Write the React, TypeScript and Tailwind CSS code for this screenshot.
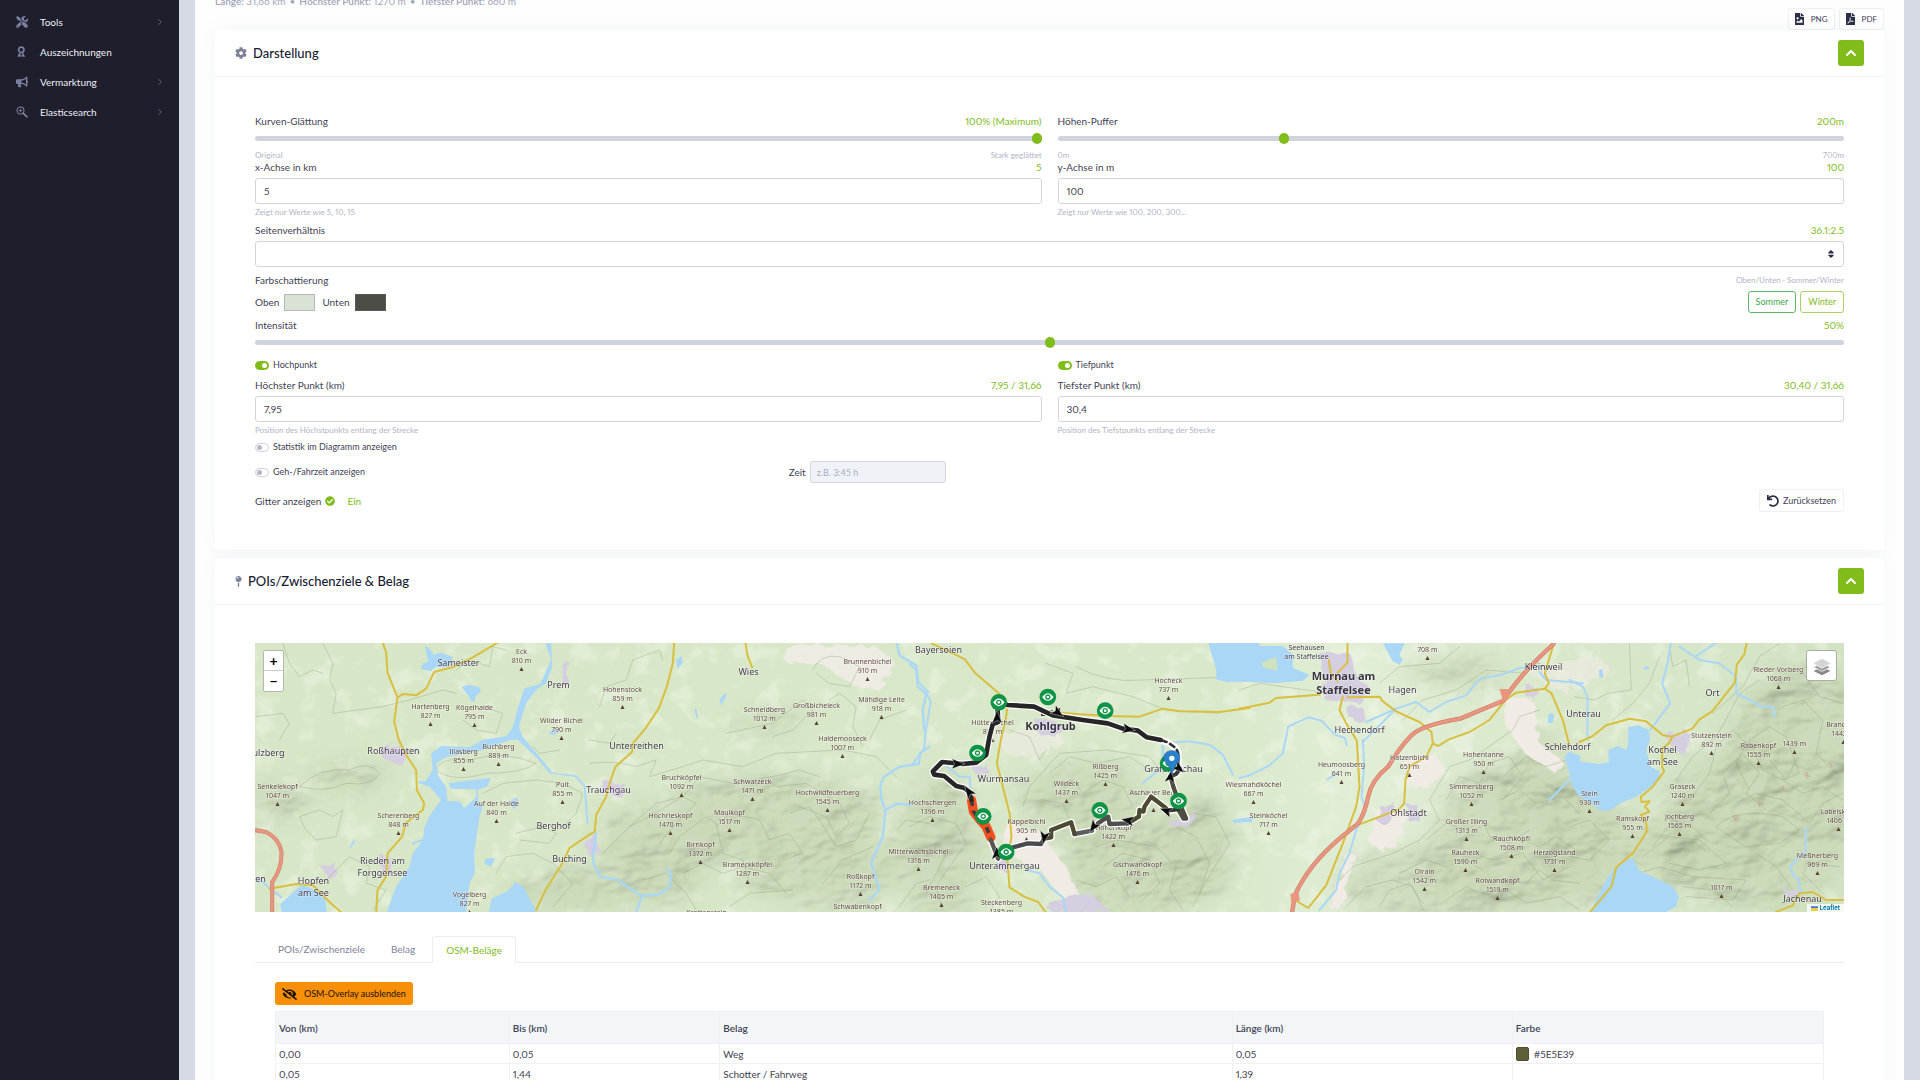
import React, { useState } from "react";
import {
  FaTools,
  FaBullhorn,
  FaCog,
  FaMapPin,
  FaFileImage,
  FaFilePdf,
  FaUndo,
  FaEyeSlash,
  FaSort,
  FaCheckCircle,
} from "react-icons/fa";
import { LuChevronRight, LuChevronUp } from "react-icons/lu";

const MedalIcon = () => (
  <svg viewBox="0 0 16 16" className="h-3 w-3" fill="none" stroke="currentColor" aria-hidden="true">
    <circle cx="7" cy="5" r="3.600" strokeWidth="2.200" />
    <path d="M5.500 9.500 3.500 12M8.500 9.500l2 2.500" strokeWidth="1.600" />
    <path d="m3.500 10.500-1.500 4 2.500-.4 1.500 1 .8-3.600zM10.500 10.500l1.500 4-2.500-.4-1.500 1-.8-3.600z" fill="currentColor" stroke="none" />
  </svg>
);

const SearchIcon = () => (
  <svg viewBox="0 0 16 16" className="h-3 w-3" fill="none" stroke="currentColor" aria-hidden="true">
    <circle cx="6" cy="6" r="4.600" strokeWidth="1.500" />
    <path d="M6 3.800v4.400M3.800 6h4.400" strokeWidth="1.200" />
    <path d="m9.800 9.800 4.700 4.700" strokeWidth="2.200" strokeLinecap="round" />
  </svg>
);

const NAV = [
  { label: "Tools", icon: <FaTools />, sub: true },
  { label: "Auszeichnungen", icon: <MedalIcon />, sub: false },
  { label: "Vermarktung", icon: <FaBullhorn />, sub: true },
  { label: "Elasticsearch", icon: <SearchIcon />, sub: true },
];

function Sidebar() {
  return (
    <nav className="flex w-[179px] shrink-0 flex-col bg-[#1e1e2d] pt-[7px]">
      {NAV.map((n) => (
        <a key={n.label} href="#" className="flex h-[30px] items-center pr-3.5 pl-4 text-[#f0f0f5]">
          <span className="flex w-6 text-xs text-[#7c7fa0]">{n.icon}</span>
          <span className="flex-1">{n.label}</span>
          {n.sub && <LuChevronRight className="h-2.5 w-2.5 text-[#6c6e91]" />}
        </a>
      ))}
    </nav>
  );
}

function LabelRow({ id, label, value }: { id?: string; label: string; value?: string }) {
  return (
    <div className="mb-1 flex items-center justify-between leading-[14px]">
      <label htmlFor={id}>{label}</label>
      <span className="text-[#80bc1a]">{value}</span>
    </div>
  );
}

function Hint({ left, right }: { left: string; right?: string }) {
  return (
    <div className="flex justify-between text-[8px] leading-3 text-[#b1b4c5]">
      <span>{left}</span>
      <span>{right}</span>
    </div>
  );
}

function Range({ id, max, value }: { id: string; max: number; value: number }) {
  const [v, setV] = useState(value);
  return (
    <input
      id={id}
      type="range"
      min={0}
      max={max}
      value={v}
      onChange={(e) => setV(Number(e.target.value))}
      className="block h-3 w-full appearance-none bg-transparent [&::-webkit-slider-runnable-track]:h-[5px] [&::-webkit-slider-runnable-track]:rounded-full [&::-webkit-slider-runnable-track]:bg-[#d1d4df] [&::-webkit-slider-thumb]:-mt-[3px] [&::-webkit-slider-thumb]:h-[11px] [&::-webkit-slider-thumb]:w-[10px] [&::-webkit-slider-thumb]:appearance-none [&::-webkit-slider-thumb]:rounded-full [&::-webkit-slider-thumb]:bg-[#80bc1a]"
    />
  );
}

function TextInput({ id, value }: { id: string; value: string }) {
  return (
    <input
      id={id}
      defaultValue={value}
      className="block h-[26px] w-full rounded-[3px] border border-[#d3d5da] bg-white px-2 outline-none"
    />
  );
}

function Switch({ id, label, on }: { id: string; label: string; on?: boolean }) {
  return (
    <label htmlFor={id} className="flex items-center gap-1 text-[9px] leading-[14px]">
      <input
        id={id}
        type="checkbox"
        role="switch"
        defaultChecked={on}
        className="flex h-[9px] w-[14px] appearance-none items-center rounded-full border border-[#cfd1da] bg-white p-px before:block before:h-[5px] before:w-[5px] before:rounded-full before:bg-[#b5b8c5] checked:border-[#80bc1a] checked:bg-[#80bc1a] checked:before:ml-[5px] checked:before:bg-white"
      />
      {label}
    </label>
  );
}

function Card({ icon, title, children }: { icon: React.ReactNode; title: string; children: React.ReactNode }) {
  return (
    <section className="rounded-sm bg-white shadow-[0_0_20px_rgba(76,87,125,0.06)]">
      <header className="flex h-[47px] items-center border-b border-[#f3f3f7] pr-5 pl-5">
        <span className="mr-1.5 text-[#7e8299]">{icon}</span>
        <h2 className="flex-1 text-[13px] font-medium text-[#181c32]">{title}</h2>
        <button
          type="button"
          aria-label="Einklappen"
          className="flex h-[26px] w-[26px] items-center justify-center rounded-[3px] bg-[#80bc1a] text-white"
        >
          <LuChevronUp className="h-4 w-4" strokeWidth={3} />
        </button>
      </header>
      {children}
    </section>
  );
}

function Darstellung() {
  return (
    <Card icon={<FaCog className="h-3 w-3" />} title="Darstellung">
      <div className="px-10 pt-[37px] pb-[38px]">
        <div className="grid grid-cols-2 gap-x-4">
          <div>
            <LabelRow id="smooth" label="Kurven-Glättung" value="100% (Maximum)" />
            <Range id="smooth" max={100} value={100} />
            <div className="mt-[5px] -mb-px">
              <Hint left="Original" right="Stark geglättet" />
            </div>
            <LabelRow id="xaxis" label="x-Achse in km" value="5" />
            <TextInput id="xaxis" value="5" />
            <div className="mt-0.5">
              <Hint left="Zeigt nur Werte wie 5, 10, 15" />
            </div>
          </div>
          <div>
            <LabelRow id="buffer" label="Höhen-Puffer" value="200m" />
            <Range id="buffer" max={700} value={200} />
            <div className="mt-[5px] -mb-px">
              <Hint left="0m" right="700m" />
            </div>
            <LabelRow id="yaxis" label="y-Achse in m" value="100" />
            <TextInput id="yaxis" value="100" />
            <div className="mt-0.5">
              <Hint left="Zeigt nur Werte wie 100, 200, 300..." />
            </div>
          </div>
        </div>

        <div className="mt-[5px]">
          <LabelRow id="ratio" label="Seitenverhältnis" value="36.1:2.5" />
          <div className="relative">
            <select
              id="ratio"
              className="block h-[26px] w-full appearance-none rounded-[3px] border border-[#d3d5da] bg-white px-2 outline-none"
            >
              <option></option>
            </select>
            <FaSort className="pointer-events-none absolute top-2 right-2 h-2.5 w-2.5 text-[#2b2f48]" />
          </div>
        </div>

        <div className="mt-1.5 mb-1 flex justify-between leading-[14px]">
          <span>Farbschattierung</span>
          <span className="text-[8px] text-[#b1b4c5]">Oben/Unten · Sommer/Winter</span>
        </div>
        <div className="flex h-[22px] items-center">
          <span className="mr-[5px]" id="lbl-top">Oben</span>
          <button type="button" aria-labelledby="lbl-top" className="mr-[7px] h-[17px] w-[31px] border border-[#b4bab0] bg-[#d9e2d4]" />
          <span className="mr-[5px]" id="lbl-bottom">Unten</span>
          <button type="button" aria-labelledby="lbl-bottom" className="h-[17px] w-[31px] border border-[#5a5b55] bg-[#4b4c46]" />
          <span className="flex-1" />
          <button type="button" className="mr-1 h-[22px] rounded-[3px] border border-[#5fb868] px-[7px] text-[9px] text-[#3fa64a]">
            Sommer
          </button>
          <button type="button" className="h-[22px] rounded-[3px] border border-[#a9d265] px-[7px] text-[9px] text-[#80bc1a]">
            Winter
          </button>
        </div>

        <div className="mt-[5px]">
          <LabelRow id="intensity" label="Intensität" value="50%" />
          <Range id="intensity" max={100} value={50} />
        </div>

        <div className="mt-2.5 grid grid-cols-2 gap-x-4">
          <div>
            <Switch id="sw-high" label="Hochpunkt" on />
            <div className="mt-1.5">
              <LabelRow id="high" label="Höchster Punkt (km)" value="7,95 / 31,66" />
              <TextInput id="high" value="7,95" />
            </div>
            <div className="mt-0.5">
              <Hint left="Position des Höchstpunkts entlang der Strecke" />
            </div>
          </div>
          <div>
            <Switch id="sw-low" label="Tiefpunkt" on />
            <div className="mt-1.5">
              <LabelRow id="low" label="Tiefster Punkt (km)" value="30,40 / 31,66" />
              <TextInput id="low" value="30,4" />
            </div>
            <div className="mt-0.5">
              <Hint left="Position des Tiefstpunkts entlang der Strecke" />
            </div>
          </div>
        </div>

        <div className="mt-1">
          <Switch id="sw-stat" label="Statistik im Diagramm anzeigen" />
        </div>
        <div className="mt-[7px] grid grid-cols-3 items-center">
          <Switch id="sw-time" label="Geh-/Fahrzeit anzeigen" />
          <div className="flex items-center gap-1 pl-1">
            <label htmlFor="time">Zeit</label>
            <input
              id="time"
              disabled
              placeholder="z.B. 3:45 h"
              className="h-[22px] w-[136px] rounded-[3px] border border-[#d3d5da] bg-[#eff3f8] px-1.5 text-[9px] placeholder:text-[#a9adc0]"
            />
          </div>
        </div>
        <div className="mt-1.5 flex items-center">
          <label htmlFor="grid" className="mr-1">Gitter anzeigen</label>
          <span className="relative mr-3 h-2.5 w-2.5">
            <input id="grid" type="checkbox" defaultChecked className="absolute inset-0 h-2.5 w-2.5 appearance-none" />
            <FaCheckCircle className="pointer-events-none h-2.5 w-2.5 text-[#80bc1a]" />
          </span>
          <span className="flex-1 text-[#80bc1a]">Ein</span>
          <button type="button" className="flex h-[23px] items-center gap-1 rounded-[3px] border border-[#eff0f5] px-[7px] text-[9px]">
            <FaUndo className="h-3 w-3 text-[#2b2f48]" />
            Zurücksetzen
          </button>
        </div>
      </div>
    </Card>
  );
}

/* ---------- map ---------- */

type Pt = [number, number, number, string];

const TILE = [-5, 335, 655, 985, 1315];
const place = (t: number, x: number, y: number): [number, number] => [
  Math.round(TILE[t] + x / 3),
  Math.round(y / 3 - 3),
];

/* tile, x, y, name (| separates lines) */
const TOWNS: Pt[] = [
  [0, 626, 67, "Sameister"], [0, 928, 133, "Prem"], [0, 58, 336, "ulzberg"], [0, 432, 330, "Roßhaupten"],
  [0, 913, 555, "Berghof"], [0, 960, 653, "Buching"], [0, 400, 661, "Rieden am|Forggensee"],
  [0, 192, 720, "Hopfen|am See"], [0, 32, 715, "en"], [1, 478, 92, "Wies"], [1, 140, 316, "Unterreithen"],
  [1, 58, 448, "Trauchgau"], [2, 88, 27, "Bayersoien"], [2, 282, 414, "Wurmansau"], [2, 285, 674, "Unterammergau"],
  [2, 793, 383, "Grafenaschau"], [3, 488, 148, "Hagen"], [3, 359, 267, "Hechendorf"], [3, 506, 517, "Ohlstadt"],
  [3, 912, 79, "Kleinweil"], [4, 42, 218, "Unterau"], [4, 428, 155, "Ort"], [4, -5, 318, "Schlehdorf"],
  [4, 278, 327, "Kochel|am See"], [4, 700, 775, "Jachenau"],
];
const SMALL: Pt[] = [[3, 200, 22, "Seehausen|am Staffelsee"]];
const BOLD: Pt[] = [[3, 312, 106, "Murnau am|Staffelsee"], [2, 423, 212, "Bad|Kohlgrub"]];

/* tile, x, y of the name, name|height */
const PEAKS: Pt[] = [
  [0, 816, 34, "Eck|810 m"], [0, 542, 197, "Hartenberg|827 m"], [0, 676, 200, "Kögelhalde|795 m"],
  [0, 935, 239, "Wilder Bichel|790 m"], [0, 746, 317, "Buchberg|889 m"], [0, 642, 333, "Illasberg|855 m"],
  [0, 83, 439, "Senkelekopf|1047 m"], [0, 940, 432, "Pult|855 m"], [0, 741, 490, "Auf der Halde|840 m"],
  [0, 446, 524, "Scherenberg|848 m"], [0, 660, 761, "Vogelberg|827 m"],
  [1, 100, 147, "Hohenstock|859 m"], [1, 833, 62, "Brunnenbichel|910 m"], [1, 526, 207, "Schneidberg|1012 m"],
  [1, 680, 194, "Großbicheleck|981 m"], [1, 877, 178, "Mähdige Leite|918 m"], [1, 758, 295, "Haldemooseck|1007 m"],
  [1, 275, 410, "Bruchköpfel|1092 m"], [1, 490, 423, "Schwarzeck|1471 m"], [1, 715, 456, "Hochwildfeuerberg|1545 m"],
  [1, 243, 524, "Hochrieskopf|1470 m"], [1, 419, 515, "Maulkopf|1517 m"], [1, 334, 611, "Birnkopf|1372 m"],
  [1, 474, 673, "Brameckköpfel|1287 m"], [1, 814, 707, "Roßkopf|1172 m"], [1, 350, 815, "Krottenstein|"],
  [1, 804, 797, "Schwabenkopf|1218 m"],
  [2, 69, 485, "Hochschergen|1396 m"], [2, 26, 632, "Mitterwachsbichel|1316 m"], [2, 96, 741, "Bremeneck|1405 m"],
  [2, 276, 786, "Steckenberg|1385 m"], [2, 248, 246, "Hüttenbichel|891 m"], [2, 778, 119, "Hocheck|737 m"],
  [2, 589, 379, "Rißberg|1425 m"], [2, 470, 430, "Wildeck|1437 m"], [2, 352, 542, "Kappelbichl|905 m"],
  [2, 733, 457, "Aschauer Berg|"], [2, 613, 560, "Hohenkopf|1422 m"], [2, 683, 673, "Gschwandkopf|1476 m"],
  [3, 42, 431, "Wiesmahdköchel|667 m"], [3, 88, 526, "Steinköchel|717 m"], [3, 306, 371, "Heumoosberg|641 m"],
  [3, 509, 352, "Hatzenbichl|651 m"], [3, 564, 0, "|708 m"], [3, 733, 341, "Hohentanne|950 m"],
  [3, 697, 437, "Simmersberg|1052 m"], [3, 682, 544, "Großer Illing|1313 m"], [3, 816, 593, "Rauchköpfl|1508 m"],
  [3, 678, 636, "Rauheck|1590 m"], [3, 946, 636, "Herzogstand|1731 m"], [3, 556, 694, "Ölrain|1542 m"],
  [3, 775, 721, "Rotwandkopf|1519 m"],
  [4, 627, 88, "Rieder Vorberg|1068 m"], [4, 426, 284, "Stutzenstein|892 m"], [4, 567, 314, "Rabenkopf|1555 m"],
  [4, 676, 281, "|1439 m"], [4, 821, 252, "Brandkopf|1442 m"], [4, 338, 437, "Graseck|1240 m"],
  [4, 59, 458, "Stein|930 m"], [4, 188, 534, "Ramskopf|955 m"], [4, 329, 527, "Jochberg|1565 m"],
  [4, 808, 514, "Labelskopf|1406 m"], [4, 745, 644, "Meßnerberg|969 m"], [4, 457, 714, "|1017 m"],
];

const POIS: [number, number][] = [[268, 187], [415, 171], [587, 212], [204, 339], [776, 370], [807, 483], [571, 511], [221, 529], [290, 636]];
const ARROWS: [number, number, number][] = [
  [263, 232, 0], [445, 218, 125], [657, 268, 100], [808, 385, 130], [783, 410, 10], [770, 512, 290],
  [655, 541, 280], [552, 560, 215], [404, 592, 190], [262, 640, 0], [178, 455, 325], [145, 372, 92],
];

/* tour sections: path, colour, width, dash */
const ROUTE: [string, string, number, string?][] = [
  ["M268 190L295 195 374 200 430 226 520 240 595 250 640 266 685 272 712 292 754 300", "#262626", 14],
  ["M756 301L775 307 800 325 806 340 806 384", "#333333", 8, "16 12"],
  ["M812 386L800 402 783 410", "#3b3b3b", 12],
  ["M783 410L792 442 806 480 830 536 822 536 802 500", "#4f4d40", 13],
  ["M806 508L770 512", "#333333", 12],
  ["M770 505L725 470 705 500 702 515 690 510 688 530 655 550", "#4d4a33", 13],
  ["M655 550L600 552 596 530 565 550", "#4f4f4c", 13],
  ["M548 572L495 582", "#5c5d5f", 13],
  ["M495 582L485 547 425 570 425 592 404 596", "#4d4a33", 13],
  ["M404 596L395 612 355 610 310 622 290 636", "#4a4b4d", 13],
  ["M266 656L244 600", "#555555", 13],
  ["M186 480L178 455 165 444 140 438 104 408 74 404 70 394 98 366 160 372 200 368 230 345 240 290 250 252 266 246 264 195", "#262626", 14],
];

/* tile, cx, cy, rx, ry of raised terrain */
const HILLS: [number, number, number, number, number][] = [
  [1, 560, 520, 330, 110], [1, 230, 600, 210, 110], [1, 700, 690, 240, 110], [0, 300, 410, 110, 40], [0, 80, 480, 90, 50],
  [1, 530, 255, 110, 25], [2, 90, 620, 130, 220], [2, 520, 480, 190, 120], [2, 690, 690, 230, 150], [2, 860, 620, 120, 150],
  [3, 850, 600, 270, 230], [3, 560, 730, 270, 110], [3, 900, 420, 90, 130], [3, 650, 90, 150, 40],
  [4, 60, 620, 160, 170], [4, 560, 560, 300, 250], [4, 700, 300, 220, 220], [4, 390, 640, 200, 120], [1, 100, 740, 240, 60],
  [0, 900, 770, 120, 50],
];

const CONTOURS = [
  [0, "M100 10l20 60 30 40 40-20 30 10M220 10l30 60-10 50 20 40-10 60 150-20 80-20 100-30 40 10M20 230l80-10 20 30-30 50M150 440q60-60 150-50 60-30 90 10-20 40-100 30-60 30-140 10M150 530l60-20 40 20 30-20-20 80-60 10-30-30zM560 390q10-40 100-30 100-30 200 10-40 30-150 30-100 30-150-10M700 460l60-30 100-10 80 10 60 30-20 60-40 40M740 700l30-50 80-10 60 30 60 60-60 70M230 720l70-70 60 30-10 50 60 20-40 60M620 90l40-30 60 20 10-60 40 10M800 580l80-20 40 20-20 30-90-10M700 200l60 20-20 60-60-10-40-30M930 330l-60 10-20-20"],
  [1, "M0 370q80-10 140 10l60-20-20 50 100-30 60-20 120 20 100-40 200-10 100 20 60 60M30 200l20-60 60-20 20-60 80-30 10 30M0 300l60 10 20-30M410 280l140-30 90-70 30 30-60 60-60 20M670 90q20-50 80-40l60 30-30 60-60-10-40-30M720 180l30-20 50 40-10 60 30 60M840 300l30-60 80-30M120 560l80-70 80-20 50-60 100 20 120-20 80-20 60 20M40 640l80-80 60-30 100-60 40 20-60 60-50 60M240 640l30-50 80-60 30 20 20 90 60 20 20 70M380 560l40-40 90 20 30 60 60-20 40 60-60 20M540 420l20 20 90-10 100 60 30 60-40 40-30-60-80-30M600 520l60-20 30 40 50 80 60-20 40-80M280 700l60-30 60 30 60-20 80 20 50 60M160 720l70-20 60 60 30 50M420 800l60-40 130-10M700 730l60-70 90-40M930 800l50-70 40-10M920 570l30-30 70 10"],
  [2, "M0 560l60-30 80 20 30 60-50 70-40 60 20 70M0 640l80-30 30 30-60 120M420 400l60-50 80 20 100-20 60 40M430 440l60-20 30 40 60-40 60 20 30 60M400 480l60 10 20 50M340 500l20-60 90-100 140-10 130 20 40 50M560 620l60-20 120 20 60 60-20 70 40 60M580 680l60-40 80 20 30 70-60 60M800 560l60 30 40 80-30 90M850 520l70 10 40 80-50 80-60 110M300 270l60 20 30 70 20-30M410 70l80 30-20 60 80-20 120 30 100 40 160 10M500 80q90 50 200 40l300-10M170 740l60-30 40 60-40 60M500 720l60 20 60-30 40 60"],
  [3, "M280 740l60-60 120-40 80-40 60-60-30-60 60-100 60-20 130-90 20-40 60-20M320 800l60-60 80-20 60 20 30 70M420 800l30-50 60-20 40 60M480 700l80-40 60 20 60-20 50 30M560 600l60-50 60 20 50-30 20 50 60 20 60-40M620 480l40-70 60 20 30-60 60-20 40 60-60 70M800 400l60-50 60 30 60-20 40 60M780 480l60-30 50 40 80-20 50 50M620 780l60-40 40 20 80-10 60 40 100-20 60 40M850 600l50 20 50-30 60 40M700 640l60 20 90-20 60 80 80-40M420 130l60-50 120-10 60-50M490 240l60-60 100-30 90-60 120 10M860 730l40-40 40 30 80 10M0 150l60-20 140 20 100 10"],
  [4, "M180 10l5 140-70 10-40 20-60-10M270 50l-30 80-50 60-60 50M300 20l10 60 40-20 10 80M430 220l90-80 50-90 60-40M320 420l50-70 70-60 40-70 30-60 60-40M360 480l60-80 20-80 50-50 40 40-30 60 40 80M420 520l60-60-20-60 60-60 50 60-40 60 60 50M440 560q60-60 200-30l50 40-60 40-100 10zM500 490l60-30 80 20 80 70 40-60 60-30M210 700l60-20 100 30 160 10-40 60-140-10M220 650l80-60 90 10 80 70-80 20-90-20M250 620l60-80 60 20 40 40M540 300l60-40 50 30 40 110-50 20-60-30zM640 200l60-20 60 60-20 100 60 60M700 100l50 70 70 20M640 420l60 40 60-20 60 40M560 640l60 40 50 70M760 760l-60-60 20-30 90 10M340 740l90 10 60 50M600 360l50 60 30-60M0 560l60-20 60 60-60 60-60-10"],
] as const;

function MapLabel({ p, size, weight, gap, fill }: { p: Pt; size: number; weight: number; gap: number; fill: string }) {
  const [x, y] = place(p[0], p[1], p[2]);
  return (
    <text x={x} y={y} fontSize={size} fontWeight={weight} fill={fill} stroke="#ffffff" strokeOpacity={0.5} strokeWidth={1} paintOrder="stroke" textAnchor="middle" dominantBaseline="central">
      {p[3].split("|").map((l, i) => (
        <tspan key={i} x={x} dy={i ? gap : 0}>{l}</tspan>
      ))}
    </text>
  );
}

function Peak({ p }: { p: Pt }) {
  const [x, y] = place(p[0], p[1], p[2]);
  return (
    <g>
      <MapLabel p={p} size={7} weight={400} gap={9} fill="#604a44" />
      <path d={`M${x - 2} ${y + 20}h4l-2-4z`} fill="#5a3f35" />
    </g>
  );
}

function Tile({ t, children }: { t: number; children: React.ReactNode }) {
  return (
    <g transform={`translate(${TILE[t]} -3) scale(.33333)`} fill="none" strokeLinejoin="round" strokeLinecap="round">
      {children}
    </g>
  );
}

const ROAD = "#d9bf3f";
const WATER = "#aad7f6";
const MOTOR = "#e9967f";

function MapDrawing() {
  return (
    <svg viewBox="0 0 1590 269" preserveAspectRatio="xMidYMid slice" className="block h-full w-full" fontFamily='"Noto Sans", sans-serif' aria-label="Karte">
      <defs>
        <filter id="relief" x="0" y="0" width="100%" height="100%">
          <feTurbulence type="fractalNoise" baseFrequency="0.014 0.022" numOctaves="4" seed="8" result="n" />
          <feDiffuseLighting in="n" surfaceScale="11" diffuseConstant="1.200" lightingColor="#f6f8ee">
            <feDistantLight azimuth="225" elevation="58" />
          </feDiffuseLighting>
        </filter>
        <filter id="woods" x="0" y="0" width="100%" height="100%">
          <feTurbulence type="fractalNoise" baseFrequency="0.045" numOctaves="3" seed="3" />
          <feColorMatrix values="0 0 0 0 .94  0 0 0 0 .96  0 0 0 0 .89  0 5 0 0 -2.700" />
        </filter>
        <filter id="soft" x="-50%" y="-50%" width="200%" height="200%">
          <feGaussianBlur stdDeviation="11" />
        </filter>
        <filter id="settle" x="-50%" y="-50%" width="200%" height="200%">
          <feTurbulence type="fractalNoise" baseFrequency="0.100" numOctaves="2" seed="5" />
          <feDisplacementMap in="SourceGraphic" scale="12" />
        </filter>
        <mask id="hills">
          <g filter="url(#soft)">
            {HILLS.map(([t, cx, cy, rx, ry], i) => {
              const [x, y] = place(t, cx, cy);
              return <ellipse key={i} cx={x} cy={y} rx={rx / 3} ry={ry / 3} fill="#fff" opacity={0.7} />;
            })}
          </g>
        </mask>
        <linearGradient id="land" x1="0" x2="1" y1="0" y2="0">
          <stop offset="0" stopColor="#d6e6c6" />
          <stop offset=".6" stopColor="#d8e8c9" />
          <stop offset=".7" stopColor="#e1eed6" />
          <stop offset=".78" stopColor="#dbe9cd" />
          <stop offset="1" stopColor="#d2e3c3" />
        </linearGradient>
      </defs>
      <rect width="1590" height="269" fill="url(#land)" />
      <rect width="1590" height="269" filter="url(#woods)" opacity=".35" />
      <g mask="url(#hills)">
        <rect width="1590" height="269" fill="#c8d6b8" />
        <rect width="1590" height="269" filter="url(#relief)" style={{ mixBlendMode: "multiply" }} opacity=".7" />
      </g>

      {/* settlements and open ground */}
      <g filter="url(#settle)">
        <g fill="#f0ebe4">
          <path d="M530 3h90l20 15-15 30-25-5-30-20-40-5z" opacity=".9" />
          <path d="M752 180l30 5 30 40 20 44h-14l-30-40-40-20z" />
          <path d="M1120 165l30 5 0 20-20 20-15-10z" />
          <path d="M1150 115l30-5 10 15-15 20-20-5z" />
          <path d="M1250 50l30 10 5 40 25 20-10 10-30-20-20-30z" />
          <path d="M740 90l60-5 10 15-30 15-30-5z" opacity=".6" />
          <path d="M1075 265l18-55 8 2-15 57z" />
          <path d="M1270 30l70-20 20 20-50 20z" opacity=".6" />
        </g>
        <g fill="#d5cde0">
          <path d="M125 108l20-8 10 12-8 10-18-6zM68 225l14-4 2 12-10 4zM126 212l10 2-2 16-6-2zM308 22l6-5-1 28-5-4zM348 138l24 4-6 12-22-6zM1065 10l30 0 8 26 14 10-12 14-36-4 0-20zM1090 62l20 4-2 14-12-4zM1125 165l14-6-4 26-12-6zM1150 160l14 2 0 16-12-2zM780 75l26 4-4 16-20-6zM718 125l14-4 2 8-10 6zM915 180l26-12 2 6-22 12zM740 208l14 2 0 20-12-4zM795 258l40-8 20 19h-60zM1410 92l28-4-6 26-14-10zM1270 40l14 4 0 14-12-4zM330 200l10-10 6 20-12 4zM1530 246l20 2-4 8-16-4z" />
        </g>
      </g>

      {/* contour lines */}
      {CONTOURS.map(([t, d]) => (
        <Tile key={t} t={t}>
          <path d={d} stroke="#8a9a7c" strokeOpacity=".5" strokeWidth="2" />
        </Tile>
      ))}

      {/* lakes and rivers */}
      <Tile t={0}>
        <g fill={WATER}>
          <path d="M526 16l14 10 12 18 22-6 36 12-10 30-42 2-14 12-30-8 6-16 16-4z" />
          <path d="M636 142l20-8 34 8 4 14-16 12-2 18-12-2-6-16z" />
          <path d="M888 10L905 60 872 132 825 145 806 200 790 262 770 288 700 300 660 322 575 318 545 340 550 390 528 424 504 424 508 430 540 440 575 480 545 520 525 560 520 600 490 640 480 680 440 740 412 816H650L660 730 676 700 674 640 690 530 700 500 686 480 684 450 712 440 724 414 640 424 598 430 604 446 680 448 680 472 644 504 630 484 594 484 590 440 566 408 560 370 590 352 700 330 780 300 806 300 860 352 900 400 980 412V406L910 398 870 350 820 290 808 260 830 190 860 150 890 130 908 80 905 10z" />
          <path d="M92 792l40-36 26-22 24 10 44 26 6 46H96zM718 816l8-40 50-24 22-26 24 14 18 36 22 40zM786 480l18-8 2 24-14 12-8-14zM706 656l32-2-14 26-18-8zM300 620l12-20 6 4-14 20zM896 278l20-10 12 8-16 10z" />
        </g>
        <path d="M20 716l22 12 30 26 24 18M980 410l26 30 8 110" stroke={WATER} strokeWidth="6" />
        <path d="M490 610l30-10" stroke={WATER} strokeWidth="6" />
      </Tile>
      <Tile t={1}>
        <path d="M260 60l16-12 4 20-16 18zM390 180l16-20 6 4-16 32zM314 206l8 30 4-2-6-28z" fill={WATER} />
        <path d="M20 580L10 640 12 670 32 710 80 718 125 748 158 768 205 764 240 744 244 700 232 686M158 768l-18 48M922 10l8 36 50 30 6 50 30 30M1010 160l-10 50 4 60M1020 320L992 340 988 372 930 380 882 412 872 440 876 480 888 510 880 590 862 630 845 670 870 750 840 780M886 510l40-20 40 6" stroke={WATER} strokeWidth="7" />
      </Tile>
      <Tile t={2}>
        <path d="M896 8l24 80 0 30 30 8 100-2V8zM968 540l60-10v16l-56 2z" fill={WATER} />
        <path d="M0 72l20 18 4 50 26 20 14 24-14 80-6 60-36 50M350 690l40 10 30 40 40 32 10 40M700 430l60-50 0-70 80-6 60 10 40 30 30 60M100 370l50 40 30 0 4 50" stroke={WATER} strokeWidth="6" />
      </Tile>
      <Tile t={3}>
        <path d="M0 18l130 0 30 26 0 40 50 20-20 18-90 8-100-6zM430 10h66l-16 34 10 16-10 14-20-10zM926 224l10-6 8 6-4 24-14 2zM974 350l14-14 34 10v84l-30-30zM0 536l60-6-60 16z" fill={WATER} />
        <path d="M110 50l-46 20 10 14 40 8z" fill="#cfe2bd" />
        <path d="M0 414L30 406 90 376 130 340 146 260 206 232 246 242 286 284 316 294 322 316M380 246l90-40 60-20 40 30 50-30 60-20 40-50 60-10 60-22 70-6M900 96l20 24 110 10M370 300l4 80-8 90 14 40-30 60-20 70-30 60-10 50-50 60M1010 400l-30 30-50 50M370 306l40-40 60-60M264 418l30-20" stroke={WATER} strokeWidth="6" />
      </Tile>
      <Tile t={4}>
        <path d="M176 262L206 256 238 270 242 300 230 330 244 380 270 394V414L240 444 200 470 152 490 120 512 90 510 60 486 30 470 10 440-6 380V342L40 366 90 372 118 366 116 330 146 318 170 330 176 310zM62 816L110 720 136 684 188 652 210 692 250 710 310 740 328 770 320 800 290 816zM88 90l10-4 4 24-12 4zM222 82l14-4 4 8-14 4z" fill={WATER} />
        <path d="M304 10l-10 60-16 60 24 60-30 40-30 40M330 20l60 40 60 10 50 40 0 50 40 20 40 22 30-2 6 30M0 120l40 20 14 30 0 130M710 566l-2 70-46 42 10 30 16 10 6 40M440 8l-60 40" stroke={WATER} strokeWidth="6" />
      </Tile>

      {/* roads */}
      <Tile t={0}>
        <g stroke={ROAD} strokeWidth="6">
          <path d="M400 8L410 38 414 98 444 172 434 245 448 300 470 345 500 390 502 450 524 490 520 510 468 550 458 590 414 640 410 710 384 750 380 816M444 172l16-10 40 4 30-20 24-50 60-16 60-30 50-30 20-12M60 746l80-14 50 4 50 50 34 30M1020 584l-60 40-24 50-50 80-26 56" />
        </g>
        <path d="M14 570l36 6q40 20 46 60 2 50-28 90v90" stroke="#d07f6c" strokeWidth="12" />
        <path d="M14 570l36 6q40 20 46 60 2 50-28 90v90" stroke={MOTOR} strokeWidth="8" />
      </Tile>
      <Tile t={1}>
        <path d="M254 10L250 70 232 140 208 205 168 265 130 310 128 335 78 380 60 430 50 470 20 525 16 575 0 584M468 10l6 36 14 36" stroke={ROAD} strokeWidth="6" />
      </Tile>
      <Tile t={2}>
        <path d="M66 10L126 38 166 58 196 98 266 158 294 196 290 230 274 300 262 370 280 440 300 520 306 590 294 660 300 742 344 770 386 786 408 816M400 214l100 8 100 6 90 2 70-24 50 8 120 2 90-12" stroke={ROAD} strokeWidth="6" />
      </Tile>
      <Tile t={3}>
        <path d="M0 206L90 188 110 174 240 164M324 172L420 170 430 184 470 214 540 246 576 276 580 310 596 318 628 298 690 276 750 240 798 180 830 158 916 146 936 160 970 240 988 310M268 60l6 40 20 24M324 8l0 60-30 30M310 170L300 210 320 250 352 302 360 440 350 500 310 610 260 736 206 804 166 780M580 310l-20 40-50 30-12 40-4 70-16 18-120 46M940 20l-24 80 12 30-12 16" stroke={ROAD} strokeWidth="6" />
        <path d="M158 816l8-50q40-90 134-170l56-46q20-30 30-80 10-50 60-90 36-60 66-90 30-34 150-54 60-26 130-54 50-80 150-170" stroke="#cf7b69" strokeWidth="13" />
        <path d="M158 816l8-50q40-90 134-170l56-46q20-30 30-80 10-50 60-90 36-60 66-90 30-34 150-54 60-26 130-54 50-80 150-170" stroke={MOTOR} strokeWidth="9" />
        <path d="M156 764l18-6 4 22-20 4zM784 150l20 0 2 20-14 8z" fill={MOTOR} stroke={MOTOR} strokeWidth="6" />
      </Tile>
      <Tile t={4}>
        <path d="M30 306L70 288 110 256 180 236 230 244 280 286 308 290 368 266 390 238 428 214 496 128 502 74 524 44 532 8M308 292L298 310 278 325V380L284 394 250 440 214 470 216 486 240 484 226 500 240 515 214 525 230 545 232 574 222 590 190 640 140 682 126 740 62 816M620 816l50-20 20-36 40-4 40 24 50 0" stroke={ROAD} strokeWidth="6" />
      </Tile>

      {/* labels */}
      {PEAKS.map((p, i) => <Peak key={i} p={p} />)}
      {TOWNS.map((p, i) => <MapLabel key={i} p={p} size={9} weight={400} gap={12} fill="#443a4c" />)}
      {SMALL.map((p, i) => <MapLabel key={i} p={p} size={7} weight={400} gap={9} fill="#443a4c" />)}
      {BOLD.map((p, i) => <MapLabel key={i} p={p} size={11} weight={700} gap={14} fill="#3a3440" />)}
      <g fontSize="8" fill="#c99a8a" textAnchor="middle">
        {([[504, 540, "B"], [577, 498, "A"], [646, 452, "Y"], [718, 414, "R"], [790, 380, "I"]] as const).map(([x, y, c]) => {
          const [px, py] = place(4, x, y);
          return <text key={c} x={px} y={py} transform={`rotate(-32 ${px} ${py})`}>{c}</text>;
        })}
      </g>

      {/* tour */}
      <Tile t={2}>
        {ROUTE.map(([d], i) => (
          <path key={i} d={d} stroke="#fff" strokeWidth="21" />
        ))}
        <path d="M186 480L192 515 208 535 230 560 244 592" stroke="#f4511e" strokeWidth="28" />
        <path d="M186 480L192 515 208 535 230 560 244 592" stroke="#3d3d3d" strokeWidth="11" strokeDasharray="18 14" strokeLinecap="butt" />
        {ROUTE.map(([d, color, width, dash], i) => (
          <path key={i} d={d} stroke={color} strokeWidth={width} strokeDasharray={dash} />
        ))}
        {ARROWS.map(([x, y, r], i) => (
          <path key={i} d="M0-20l15 38-15-9-15 9z" transform={`translate(${x} ${y}) rotate(${r})`} fill="#0d0d0d" stroke="#fff" strokeWidth="1" />
        ))}
        {POIS.map(([x, y], i) => (
          <g key={i} transform={`translate(${x} ${y})`}>
            <circle r="25" fill="#0f9347" />
            <path d="M-17 0q17-23 34 0q-17 23-34 0z" fill="#fff" />
            <circle r="8" fill="#0f9347" />
            <circle r="4" fill="#fff" />
          </g>
        ))}
        <path d="M787 402q-5-22-16-32-9-10-8-20 4-18 24-18t24 18q1 10-8 20-11 10-16 32z" fill="#2a81cb" stroke="#2268a5" strokeWidth="2" />
        <circle cx="787" cy="355" r="8" fill="#fff" />
      </Tile>
    </svg>
  );
}

function TourMap() {
  return (
    <div className="relative h-[269px] overflow-hidden bg-[#d6e6c6]">
      <MapDrawing />
      <div className="absolute top-[7px] left-2 flex w-[21px] flex-col rounded-xs border border-[#b5b9ac] bg-white text-[14px] font-bold text-black">
        <button type="button" className="flex h-5 items-center justify-center border-b border-[#ccc]">+</button>
        <button type="button" className="flex h-5 items-center justify-center">−</button>
      </div>
      <button type="button" aria-label="Ebenen" className="absolute top-[7px] right-[7px] flex h-[31px] w-[31px] items-center justify-center rounded-[3px] border border-[#a9ada2] bg-white">
        <svg viewBox="0 0 26 26" className="h-5 w-5">
          <path d="M13 14 24 19.500 13 25 2 19.500z" fill="#8a8a8a" />
          <path d="M13 9 24 14.500 13 20 2 14.500z" fill="#9b9b9b" stroke="#fff" />
          <path d="M13 3 25 9.500 13 16 1 9.500z" fill="#d4d4d4" stroke="#fff" />
        </svg>
      </button>
      <a href="#" className="absolute right-0 bottom-0 flex items-center gap-0.5 bg-white/80 px-1 font-['Inter',sans-serif] text-[6px] leading-[8px] font-bold text-[#0078a8]">
        <svg viewBox="0 0 12 8" className="h-[5px] w-[7px]">
          <path fill="#4c7be1" d="M0 0h12v4H0z" />
          <path fill="#ffd500" d="M0 4h12v3H0z" />
          <path fill="#e0bc00" d="M0 7h12v1H0z" />
        </svg>
        Leaflet
      </a>
    </div>
  );
}

function Pois() {
  return (
    <Card icon={<FaMapPin className="h-[11px] w-[7px]" />} title="POIs/Zwischenziele & Belag">
      <div className="px-10 pt-[38px] pb-10">
        <TourMap />
        <div role="tablist" className="mt-6 flex border-b border-[#ebedf3] pl-3 text-[#7e8299]">
          <button type="button" role="tab" className="h-[26px] px-[11px]">POIs/Zwischenziele</button>
          <button type="button" role="tab" className="ml-1 h-[26px] px-[11px]">Belag</button>
          <button type="button" role="tab" aria-selected="true" className="-mb-px ml-1.5 h-[27px] rounded-t-[3px] border border-b-0 border-[#ebedf3] bg-white px-[13px] text-[#80bc1a]">
            OSM-Beläge
          </button>
        </div>
        <div className="px-5 pt-[19px]">
          <button type="button" className="flex h-[23px] items-center gap-[7px] rounded-[3px] bg-[#f78f08] px-[7px] text-[9px] text-[#1a1200]">
            <FaEyeSlash className="h-3 w-[15px]" />
            OSM-Overlay ausblenden
          </button>
          <table className="mt-1.5 w-full table-fixed border-collapse text-left">
            <colgroup>
              <col className="w-[15.100%]" />
              <col className="w-[13.600%]" />
              <col className="w-[33.100%]" />
              <col className="w-[18.100%]" />
              <col />
            </colgroup>
            <thead>
              <tr className="h-8 bg-[#f3f6f9]">
                {["Von (km)", "Bis (km)", "Belag", "Länge (km)", "Farbe"].map((h) => (
                  <th key={h} scope="col" className="border border-[#eff1f5] px-[3px] font-semibold">{h}</th>
                ))}
              </tr>
            </thead>
            <tbody>
              <tr className="h-5">
                <td className="border border-[#eff1f5] px-[3px]">0,00</td>
                <td className="border border-[#eff1f5] px-[3px]">0,05</td>
                <td className="border border-[#eff1f5] px-[3px]">Weg</td>
                <td className="border border-[#eff1f5] px-[3px]">0,05</td>
                <td className="border border-[#eff1f5] px-[3px]">
                  <span className="flex items-center gap-[5px]">
                    <span className="h-[14px] w-[13px] rounded-xs border border-[#4d4d30] bg-[#5e5e39]" />
                    #5E5E39
                  </span>
                </td>
              </tr>
              <tr className="h-5">
                <td className="border border-[#eff1f5] px-[3px]">0,05</td>
                <td className="border border-[#eff1f5] px-[3px]">1,44</td>
                <td className="border border-[#eff1f5] px-[3px]">Schotter / Fahrweg</td>
                <td className="border border-[#eff1f5] px-[3px]">1,39</td>
                <td className="border border-[#eff1f5] px-[3px]"></td>
              </tr>
            </tbody>
          </table>
        </div>
      </div>
    </Card>
  );
}

export default function App() {
  return (
    <div className="flex h-screen overflow-hidden bg-[#d6dae4] font-['Lato',sans-serif] text-[10px] leading-[14px] text-[#3f4254] proportional-nums">
      <Sidebar />
      <main className="mr-4 ml-4 h-max min-w-0 flex-1 bg-[#fefefe] px-5">
        <p className="-mt-1.5 flex h-[14px] gap-1 text-[#a1a5b7]">
          <span><b className="font-semibold">Länge:</b> 31,66 km</span>
          <span>•</span>
          <span><b className="font-semibold">Höchster Punkt:</b> 1270 m</span>
          <span>•</span>
          <span><b className="font-semibold">Tiefster Punkt:</b> 660 m</span>
        </p>
        <div className="flex justify-end gap-1 text-[8px]">
          <button type="button" className="flex h-[22px] items-center gap-[7px] rounded-[3px] border border-[#eff0f5] bg-white px-1.5">
            <FaFileImage className="h-3 w-[9px] text-[#2b2f48]" />
            PNG
          </button>
          <button type="button" className="flex h-[22px] items-center gap-[7px] rounded-[3px] border border-[#eff0f5] bg-white px-1.5">
            <FaFilePdf className="h-3 w-[9px] text-[#2b2f48]" />
            PDF
          </button>
        </div>
        <div className="flex flex-col gap-2">
          <Darstellung />
          <Pois />
        </div>
      </main>
    </div>
  );
}
